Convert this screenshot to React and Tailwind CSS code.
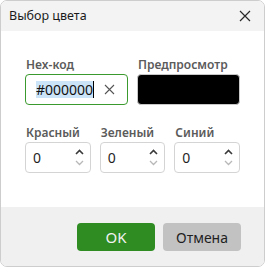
import React from 'react';

const font = { fontFamily: '"Noto Sans", "Open Sans", sans-serif' };

const Label = ({ children }) => (
    <div className="text-[12px] leading-[17px] font-semibold text-[#5b5b5b] mb-[1px] pl-[1px]">{children}</div>
);

const NumberField = ({ label, value }) => (
    <div className="w-[66px]">
        <Label>{label}</Label>
        <div className="h-[31px] border border-[#d4d4d4] rounded-[4px] bg-white flex items-center pl-[7px] pr-[6px]">
            <span className="flex-1 text-[14px] text-[#1f1f1f]">{value}</span>
            <div className="flex flex-col items-center gap-[5px]">
                <svg width="9" height="6" viewBox="0 0 9 6">
                    <path d="M1 5 L4.5 1.5 L8 5" fill="none" stroke="#3a3a3a" strokeWidth="1.6" />
                </svg>
                <svg width="9" height="6" viewBox="0 0 9 6">
                    <path d="M1 1 L4.5 4.5 L8 1" fill="none" stroke="#b8b8b8" strokeWidth="1.3" />
                </svg>
            </div>
        </div>
    </div>
);

export default function App() {
    return (
        <div style={font} className="w-[265px] h-[267px] border border-[#cdcdcd] rounded-[7px] overflow-hidden flex flex-col bg-white">
            {/* title bar */}
            <div className="h-[30px] bg-[#f3f3f3] flex items-center justify-between pl-[8px] pr-[13px]">
                <span className="text-[12.5px] text-[#1b1b1b]">Выбор цвета</span>
                <svg width="12" height="12" viewBox="0 0 12 12">
                    <path d="M1 1 L11 11 M11 1 L1 11" stroke="#2a2a2a" strokeWidth="1.2" />
                </svg>
            </div>

            {/* body */}
            <div className="flex-1 bg-white px-[24px] pt-[25px]">
                <div className="flex gap-[9px]">
                    <div className="w-[103px]">
                        <Label>Hex-код</Label>
                        <div className="h-[31px] border border-[#3b9a2e] rounded-[4px] flex items-center pl-[10px] pr-[12px]">
                            <div className="flex-1 flex items-center">
                                <span className="bg-[#cce4f7] text-[14px] leading-[17px] text-[#111]">#000000</span>
                                <span className="w-[1px] h-[17px] bg-black"></span>
                            </div>
                            <svg width="11" height="11" viewBox="0 0 11 11">
                                <path d="M1 1 L10 10 M10 1 L1 10" stroke="#555" strokeWidth="1.1" />
                            </svg>
                        </div>
                    </div>
                    <div className="w-[103px]">
                        <Label>Предпросмотр</Label>
                        <div className="h-[31px] bg-black border border-[#c8c8c8] rounded-[4px]"></div>
                    </div>
                </div>

                <div className="flex gap-[9px] mt-[19px]">
                    <NumberField label="Красный" value="0" />
                    <NumberField label="Зеленый" value="0" />
                    <NumberField label="Синий" value="0" />
                </div>
            </div>

            {/* footer */}
            <div className="h-[59px] bg-[#f0f0f0] flex items-start justify-end gap-[8px] pt-[16px] pr-[23px]">
                <button className="w-[78px] h-[28px] rounded-[4px] bg-[#2e8c22] text-[#f2f2f2] text-[15px]">OK</button>
                <button className="w-[78px] h-[28px] rounded-[4px] bg-[#c2c2c2] text-[#1f1f1f] text-[14px]">Отмена</button>
            </div>
        </div>
    );
}
